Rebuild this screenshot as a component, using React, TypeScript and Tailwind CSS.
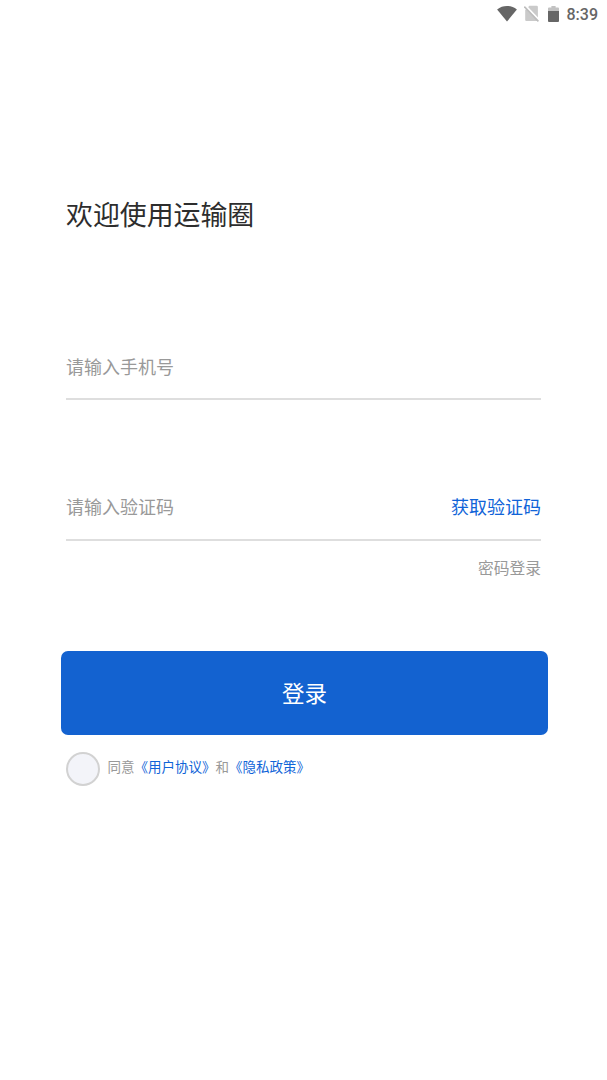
import { useState } from "react";

function StatusBar() {
  return (
    <div className="flex h-[27px] items-center justify-end pr-[9px] font-['Roboto','Noto_Sans_CJK_SC',sans-serif] text-[#666666]">
      {/* wifi */}
      <svg className="mr-[7px] h-[16px] w-[20px]" viewBox="0 0 20 16" fill="currentColor">
        <path d="M10 15.6 L0.1 3.4 C3 1.2 6.4 0 10 0 C13.6 0 17 1.2 19.9 3.4 Z" />
      </svg>
      {/* no sim */}
      <svg className="mr-[9px] h-[17px] w-[15px]" viewBox="0 0 15 17">
        <path d="M5.4 0.8 H12.6 Q13.9 0.8 13.9 2.1 V15 Q13.9 16 12.8 16 H2.4 Q1.2 16 1.2 15 V5 Z" fill="#cacaca" />
        <path d="M1.2 0.6 L15.6 15.6" stroke="#ffffff" strokeWidth="2.2" />
        <path d="M0.3 1.6 L14.4 16.4" stroke="#bdbdbd" strokeWidth="1.6" />
      </svg>
      {/* battery */}
      <svg className="mr-[8px] h-[16px] w-[11px]" viewBox="0 0 11 16">
        <path d="M3.4 0 H7.6 V1.6 H10 Q11 1.6 11 2.6 V5 H0 V2.6 Q0 1.6 1 1.6 H3.4 Z" fill="#c2c2c2" />
        <path d="M0 5 H11 V15 Q11 16 10 16 H1 Q0 16 0 15 Z" fill="#666666" />
      </svg>
      <span className="pt-[2px] text-[16px] font-medium leading-[27px]">8:39</span>
    </div>
  );
}

export default function App() {
  const [phone, setPhone] = useState("");
  const [code, setCode] = useState("");
  const [agreed, setAgreed] = useState(false);

  return (
    <div lang="zh-CN" className="min-h-[1080px] w-full bg-white font-['Noto_Sans_CJK_SC',sans-serif]">
      <StatusBar />

      <div className="px-[66px] pt-[167px]">
        <h1 className="text-[26.9px] leading-[40px] text-[#2d2d2d]">欢迎使用运输圈</h1>

        <div className="mt-[100px] flex h-[66px] items-center border-b-2 border-[#dedede] pb-[1px]">
          <input
            value={phone}
            onChange={(e) => setPhone(e.target.value)}
            placeholder="请输入手机号"
            className="w-full text-[18px] leading-[28px] outline-none placeholder:text-[#999999]"
          />
        </div>

        <div className="mt-[75px] flex h-[66px] items-center justify-between border-b-2 border-[#dedede] pb-[2px]">
          <input
            value={code}
            onChange={(e) => setCode(e.target.value)}
            placeholder="请输入验证码"
            className="w-[240px] text-[18px] leading-[28px] outline-none placeholder:text-[#999999]"
          />
          <button className="text-[18px] leading-[28px] text-[#1064d8]">获取验证码</button>
        </div>

        <div className="mt-[15px] flex justify-end">
          <button className="text-[15.75px] leading-[24px] text-[#999999]">密码登录</button>
        </div>
      </div>

      <div className="mt-[71px] pl-[61px] pr-[59px]">
        <button className="h-[84px] w-full rounded-[7px] bg-[#1362d0] text-[22.5px] text-white">登录</button>
      </div>

      <div className="mt-[17px] flex items-start pl-[65.5px]">
        <button
          onClick={() => setAgreed(!agreed)}
          className={`size-[34px] rounded-full border-2 border-[#d2d2d2] ${agreed ? "bg-[#1362d0]" : "bg-[#f3f4f9]"}`}
        />
        <p className="ml-[8px] mt-[4px] text-[13.5px] leading-[20px] text-[#999999]">
          同意<a className="text-[#1064d8]">《用户协议》</a>和<a className="text-[#1064d8]">《隐私政策》</a>
        </p>
      </div>
    </div>
  );
}
